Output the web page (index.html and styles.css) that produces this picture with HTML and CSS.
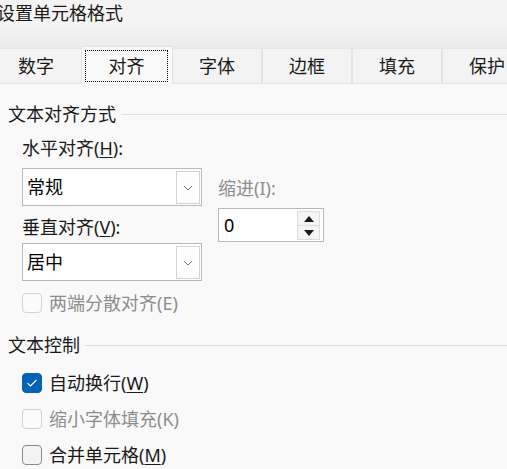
FILE: index.html
```html
<!DOCTYPE html>
<html lang="zh-CN">
<head>
<meta charset="utf-8">
<title>设置单元格格式</title>
<link rel="stylesheet" href="styles.css">
</head>
<body>
<div class="dialog">
  <div class="titlebar"><span class="title">设置单元格格式</span></div>
  <div class="tabstrip">
    <div class="tab first">数字</div>
    <div class="tab active"><span class="focus">对齐</span></div>
    <div class="tab">字体</div>
    <div class="tab">边框</div>
    <div class="tab">填充</div>
    <div class="tab">保护</div>
  </div>
  <div class="content">
    <div class="group-head"><span class="group-label">文本对齐方式</span><span class="group-line"></span></div>
    <div class="align-row">
      <div class="left-col">
        <div class="label">水平对齐(<u>H</u>):</div>
        <div class="select">
          <span class="select-value">常规</span>
          <span class="select-btn"><svg width="10" height="6" viewBox="0 0 10 6"><path d="M1 1 L5 5 L9 1" fill="none" stroke="#777" stroke-width="1"/></svg></span>
        </div>
        <div class="label label-v">垂直对齐(<u>V</u>):</div>
        <div class="select select-2">
          <span class="select-value">居中</span>
          <span class="select-btn"><svg width="10" height="6" viewBox="0 0 10 6"><path d="M1 1 L5 5 L9 1" fill="none" stroke="#777" stroke-width="1"/></svg></span>
        </div>
      </div>
      <div class="right-col">
        <div class="label disabled">缩进(I):</div>
        <div class="spin">
          <span class="spin-value">0</span>
          <span class="spin-btns">
            <span class="spin-btn up"><svg width="10" height="6" viewBox="0 0 10 6"><path d="M0 6 L5 0 L10 6 Z" fill="#1a1a1a"/></svg></span>
            <span class="spin-btn down"><svg width="10" height="6" viewBox="0 0 10 6"><path d="M0 0 L10 0 L5 6 Z" fill="#1a1a1a"/></svg></span>
          </span>
        </div>
      </div>
    </div>
    <div class="check-row check-justify disabled"><span class="box"></span><span>两端分散对齐(E)</span></div>

    <div class="group-head group-2"><span class="group-label">文本控制</span><span class="group-line"></span></div>
    <div class="check-row first-check"><span class="box checked"><svg width="12" height="10" viewBox="0 0 12 10"><path d="M1.5 5.2 L4.5 8 L10.5 2" fill="none" stroke="#fff" stroke-width="1.1"/></svg></span><span>自动换行(<u>W</u>)</span></div>
    <div class="check-row disabled"><span class="box"></span><span>缩小字体填充(K)</span></div>
    <div class="check-row"><span class="box plain"></span><span>合并单元格(<u>M</u>)</span></div>
  </div>
</div>
</body>
</html>
```
FILE: styles.css
```css
html, body {
  margin: 0;
  padding: 0;
  width: 507px;
  height: 469px;
  overflow: hidden;
  background: #f9f9f9;
}

body {
  font-family: "Noto Sans", "Noto Sans CJK SC", sans-serif;
  font-size: 18px;
  color: #1a1a1a;
}

.dialog {
  width: 507px;
  height: 469px;
  overflow: hidden;
}

.titlebar {
  height: 46px;
  background: linear-gradient(#f3f3f3 55%, #ececec);
  box-sizing: border-box;
  padding-top: 1px;
}

.title {
  display: block;
  margin-left: -3px;
  line-height: 24px;
  color: #1a1a1a;
}

.tabstrip {
  display: flex;
  align-items: flex-end;
  height: 38px;
  margin-left: -9px;
  background: #ececec;
  border-bottom: 1px solid #e3e3e3;
  box-sizing: border-box;
  position: relative;
}

.tab {
  width: 90px;
  height: 35px;
  box-sizing: border-box;
  background: #f3f3f3;
  border-right: 2px solid #e3e3e3;
  border-top: 1px solid #e6e6e6;
  display: flex;
  align-items: center;
  justify-content: center;
  line-height: 24px;
  flex: none;
}

.tab.first {
  border-right: none;
}

.tab.active {
  width: 92px;
  height: 38px;
  margin-bottom: -1px;
  background: #f9f9f9;
  border: 1px solid #e3e3e3;
  border-bottom: none;
  padding: 3px 4px 2px 3px;
  position: relative;
  z-index: 1;
}

.focus {
  display: flex;
  align-items: center;
  justify-content: center;
  width: 100%;
  height: 100%;
  box-sizing: border-box;
  border: 1px dotted #000;
}

.content {
  padding-top: 18px;
}

.group-head {
  display: flex;
  align-items: center;
  height: 24px;
  padding-left: 8px;
}

.group-label {
  line-height: 24px;
  white-space: nowrap;
}

.group-line {
  flex: 1;
  height: 1px;
  background: #dedede;
  margin-left: 5px;
  margin-top: 1px;
}

.align-row {
  display: flex;
  padding-left: 22px;
  margin-top: 10px;
}

.left-col {
  width: 180px;
}

.label {
  line-height: 24px;
  height: 24px;
  white-space: nowrap;
}

.label-v {
  margin-top: 9px;
}

.disabled {
  color: #8d8d8d;
}

.select {
  margin-top: 8px;
  height: 38px;
  box-sizing: border-box;
  border: 1px solid #b9b9b9;
  background: #fff;
  display: flex;
  align-items: stretch;
  padding: 2px 1px 1px 4px;
}

.select-2 {
  margin-top: 4px;
}

.select-value {
  flex: 1;
  line-height: 32px;
  color: #000;
}

.select-btn {
  width: 24px;
  box-sizing: border-box;
  border: 1px solid #d4d4d4;
  background: #fdfdfd;
  display: flex;
  align-items: center;
  justify-content: center;
}

.right-col {
  margin-left: 16px;
  padding-top: 40px;
}

.spin {
  margin-top: 8px;
  width: 106px;
  height: 34px;
  box-sizing: border-box;
  border: 1px solid #b9b9b9;
  background: #fff;
  display: flex;
  padding: 2px 3px 1px 5px;
}

.spin-value {
  flex: 1;
  line-height: 28px;
  color: #000;
}

.spin-btns {
  width: 23px;
  display: flex;
  flex-direction: column;
}

.spin-btn {
  flex: 1;
  display: flex;
  align-items: center;
  justify-content: center;
  background: #f5f5f5;
  border: 1px solid #dcdcdc;
}

.spin-btn.down {
  border-top: none;
}

.check-row {
  display: flex;
  align-items: center;
  height: 24px;
  padding-left: 22px;
  margin-top: 12px;
  line-height: 24px;
  white-space: nowrap;
}

.check-justify {
  margin-top: 10px;
}

.group-2 {
  margin-top: 18px;
}

.first-check {
  margin-top: 14px;
}

.box {
  width: 20px;
  height: 20px;
  box-sizing: border-box;
  border-radius: 4px;
  border: 1px solid #d2d2d2;
  background: #fbfbfb;
  margin-right: 7px;
  display: flex;
  align-items: center;
  justify-content: center;
  flex: none;
}

.box.checked {
  background: #0063b8;
  border-color: #0063b8;
}

.box.plain {
  border-color: #8a8a8a;
  background: #f3f3f3;
}

u {
  text-decoration-thickness: 1px;
  text-underline-offset: 2px;
}
```
